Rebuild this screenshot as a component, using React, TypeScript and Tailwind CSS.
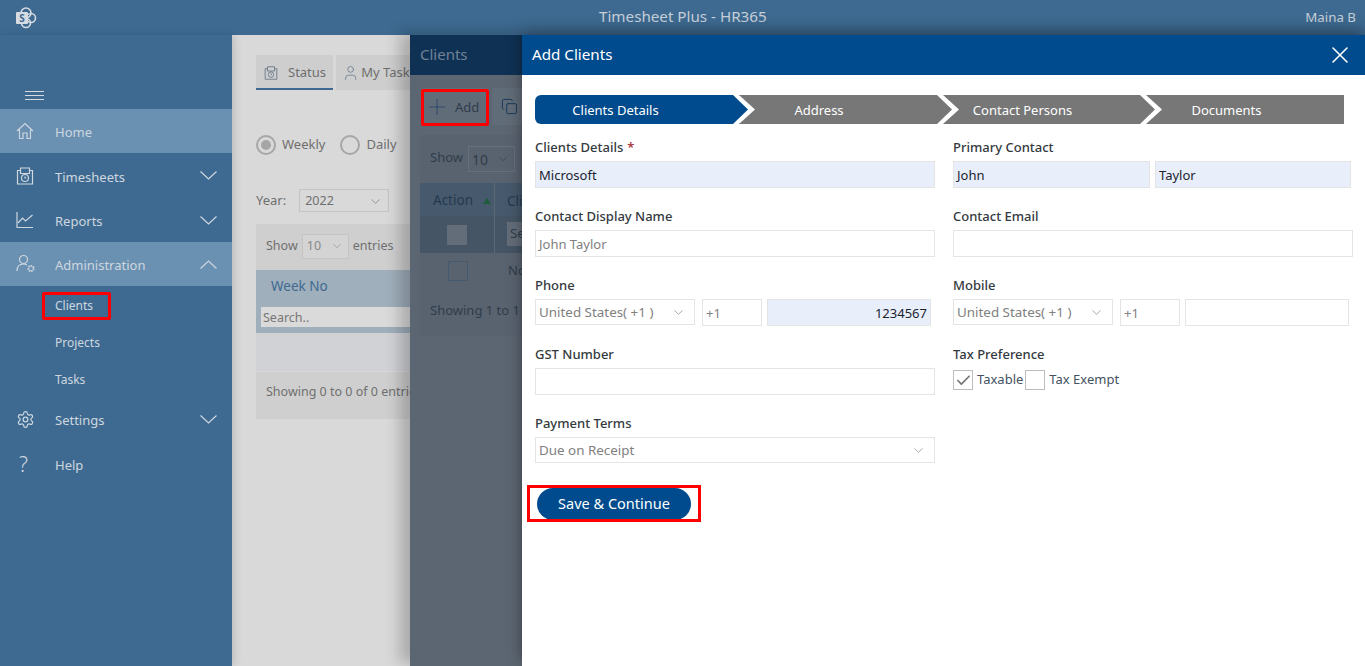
import React from "react";
import { ChevronDown, Check, X, Plus, Copy, User } from "lucide-react";

const font = "font-['Noto_Sans',sans-serif]";

function Caret({ up }: { up?: boolean }) {
  return (
    <svg width="17" height="9" viewBox="0 0 17 9" fill="none" stroke="#ced7df" strokeWidth="1.2">
      <polyline points={up ? "0.5,8.5 8.5,1 16.5,8.5" : "0.5,0.5 8.5,8 16.5,0.5"} />
    </svg>
  );
}

function NavItem({ label, icon, active, caret, className = "h-11" }: { label: string; icon: React.ReactNode; active?: boolean; caret?: "down" | "up"; className?: string }) {
  return (
    <div className={`flex items-center pl-4 pr-[15px] text-[13px] text-[#ced7df] ${active ? "bg-[#6a90b2]" : ""} ${className}`}>
      <span className="flex w-[39px] shrink-0">{icon}</span>
      <span className="flex-1 pt-[4px]">{label}</span>
      {caret && <Caret up={caret === "up"} />}
    </div>
  );
}

function Field({ label, children, required }: { label: string; children: React.ReactNode; required?: boolean }) {
  return (
    <div className="h-[69px]">
      <div className="flex h-[26px] items-center text-[13px] font-medium text-[#343a40]">
        {label}
        {required && <span className="ml-1 text-[#a52a2a]">*</span>}
      </div>
      {children}
    </div>
  );
}

function Box({ children, filled, className = "", right }: { children?: React.ReactNode; filled?: boolean; className?: string; right?: boolean }) {
  return (
    <div className={`flex h-[27px] items-center border border-[#e4e4e4] px-[3px] pt-[3px] text-[13px] ${filled ? "bg-[#e8effb] text-[#1b2330]" : "bg-white text-[#808080]"} ${right ? "justify-end" : ""} ${className}`}>
      {children}
    </div>
  );
}

function SelectBox({ children, className = "" }: { children: React.ReactNode; className?: string }) {
  return (
    <div className={`flex h-[26px] items-center justify-between border border-[#e4e4e4] bg-white pl-[3px] pr-[8px] text-[13.4px] text-[#808080] ${className}`}>
      <span>{children}</span>
      <ChevronDown size={15} strokeWidth={1} className="text-[#777]" />
    </div>
  );
}

function PhoneRow({ filled, value }: { filled?: boolean; value?: string }) {
  return (
    <div className="flex items-start">
      <SelectBox className="w-40">United States( +1 )</SelectBox>
      <Box className="ml-[7px] w-[60px]">+1</Box>
      <Box filled={filled} right className="ml-[5px] w-[164px]">{value}</Box>
    </div>
  );
}

function Step({ label, className, color }: { label: string; className: string; color: string }) {
  return (
    <div className={`relative flex h-[29px] items-center justify-center pt-[3px] text-[13px] text-white ${className}`}>
      {label}
      {color !== "" && (
        <svg className="absolute right-[-17px] top-0 z-10" width="24" height="29" viewBox="0 0 24 29">
          <polygon points="0,0 6,0 22,14.5 6,29 0,29" fill="#ffffff" />
          <polygon points="0,0 15,14.5 0,29" fill={color} />
        </svg>
      )}
    </div>
  );
}

function SheetIcon({ size, color }: { size: number; color: string }) {
  return (
    <svg width={size} height={size} viewBox="0 0 18 18" fill="none" stroke={color} strokeWidth="1.2">
      <path d="M1.5 3.5H4.5V1H13.5V3.5H16.5V17H1.5Z" />
      <path d="M4.5 3.5V6.5H13.5V3.5" />
      <circle cx="9" cy="11" r="3.5" />
      <path d="M9 9.5V11H10.2" />
    </svg>
  );
}

export default function App() {
  return (
    <div className={`${font} relative h-[666px] w-[1365px] overflow-hidden bg-[#3e6a91]`}>
      <header className="flex h-[35px] items-center justify-between bg-[#3e6a91] pl-[15px] pr-[9px] text-[#c7d0d9]">
        <svg width="22" height="22" viewBox="0 0 22 22">
          <circle cx="11" cy="6" r="5" fill="none" stroke="#d5dbe1" strokeWidth="1.6" />
          <circle cx="16" cy="11" r="4.5" fill="none" stroke="#d5dbe1" strokeWidth="1.6" />
          <circle cx="11" cy="16" r="4.5" fill="none" stroke="#d5dbe1" strokeWidth="1.6" />
          <rect x="1" y="5" width="12" height="12" rx="1" fill="#d5dbe1" />
          <text x="7" y="15" textAnchor="middle" fontSize="10" fontWeight="700" fill="#3e6a91">S</text>
        </svg>
        <span className="absolute left-[599px] top-[6px] text-[15.2px] leading-5">Timesheet Plus - HR365</span>
        <span className="text-[13.3px]">Maina B</span>
      </header>

      <div className="flex h-[631px]">
        <aside className="relative w-[232px] shrink-0 bg-[#3e6a91] shadow-[2px_0_8px_rgba(0,0,0,0.14)]">
          <div className="flex h-[74px] items-end pb-[9px] pl-[25px]">
            <div className="w-[19px] space-y-[3px]">
              <div className="h-px bg-[#d5dbe1]" />
              <div className="h-px bg-[#d5dbe1]" />
              <div className="h-px bg-[#d5dbe1]" />
            </div>
          </div>
          <NavItem active label="Home" icon={<svg width="18" height="18" viewBox="0 0 18 18" fill="none" stroke="#ced7df" strokeWidth="1.2"><path d="M1 9 9 1.5 17 9M3.5 7.5V16.5H7V11H11V16.5H14.5V7.5" /></svg>} />
          <NavItem className="h-[45px]" caret="down" label="Timesheets" icon={<SheetIcon size={18} color="#ced7df" />} />
          <NavItem caret="down" label="Reports" icon={<svg width="18" height="18" viewBox="0 0 18 18" fill="none" stroke="#ced7df" strokeWidth="1.2"><path d="M1 1V16.5H17" /><path d="M2 12 6.5 7 9.5 10 16.5 4" /></svg>} />
          <NavItem active caret="up" label="Administration" icon={<svg width="20" height="20" viewBox="0 0 20 20" fill="none" stroke="#ced7df" strokeWidth="1.2"><circle cx="7.5" cy="5.5" r="4" /><path d="M1 17C1 12.5 3.5 10 7.5 10 9 10 10 10.4 11 11" /><circle cx="15" cy="14.5" r="2.6" strokeWidth="2" strokeDasharray="1.5 0.8" /></svg>} />
          <div className="text-[12px] text-[#ced7df]">
            <div className="flex h-[37px] items-center pl-[55px] pt-[3px]">Clients</div>
            <div className="flex h-[37px] items-center pl-[55px] pt-[3px]">Projects</div>
            <div className="flex h-[37px] items-center pl-[55px] pt-[3px]">Tasks</div>
          </div>
          <NavItem caret="down" label="Settings" icon={<svg width="19" height="19" viewBox="0 0 24 24" fill="none" stroke="#ced7df" strokeWidth="1.5"><path d="M12.22 2h-.44a2 2 0 0 0-2 2v.18a2 2 0 0 1-1 1.73l-.43.25a2 2 0 0 1-2 0l-.15-.08a2 2 0 0 0-2.73.73l-.22.38a2 2 0 0 0 .73 2.73l.15.1a2 2 0 0 1 1 1.72v.51a2 2 0 0 1-1 1.74l-.15.09a2 2 0 0 0-.73 2.73l.22.38a2 2 0 0 0 2.73.73l.15-.08a2 2 0 0 1 2 0l.43.25a2 2 0 0 1 1 1.73V20a2 2 0 0 0 2 2h.44a2 2 0 0 0 2-2v-.18a2 2 0 0 1 1-1.73l.43-.25a2 2 0 0 1 2 0l.15.08a2 2 0 0 0 2.73-.73l.22-.39a2 2 0 0 0-.73-2.73l-.15-.08a2 2 0 0 1-1-1.74v-.5a2 2 0 0 1 1-1.74l.15-.09a2 2 0 0 0 .73-2.73l-.22-.38a2 2 0 0 0-2.73-.73l-.15.08a2 2 0 0 1-2 0l-.43-.25a2 2 0 0 1-1-1.73V4a2 2 0 0 0-2-2z" /><circle cx="12" cy="12" r="3" /></svg>} />
          <NavItem className="h-[46px]" label="Help" icon={<span className="pl-[3px] text-[21px] font-light leading-none">?</span>} />
        </aside>

        <main className="flex-1 bg-[#d9d9d9] pl-6 pt-[20px] text-[#6f6f6f]">
          <div className="flex h-[35px] gap-[3px] text-[13px]">
            <div className="flex w-[77px] items-center border-b-2 border-[#3e6a91] bg-[#cecece] pl-2 pt-[2px]">
              <SheetIcon size={14} color="#6c7c8c" />
              <span className="ml-[10px]">Status</span>
            </div>
            <div className="flex w-[80px] items-center bg-[#cecece] pl-[6px] pt-px">
              <User size={20} strokeWidth={1} className="text-[#5f7488]" />
              <span className="ml-[2px] whitespace-nowrap">My Tasks</span>
            </div>
          </div>
          <div className="mt-[45px] flex items-center text-[13px]">
            <span className="flex h-5 w-5 items-center justify-center rounded-full border-2 border-[#a6a6a6]"><span className="h-[10px] w-[10px] rounded-full bg-[#a6a6a6]" /></span>
            <span className="ml-[6px]">Weekly</span>
            <span className="ml-[15px] h-5 w-5 rounded-full border-2 border-[#a6a6a6]" />
            <span className="ml-[6px]">Daily</span>
          </div>
          <div className="mt-[34px] flex items-center text-[13px]">
            <span>Year:</span>
            <div className="ml-[13px] flex h-[23px] w-[90px] items-center justify-between border border-[#c4c4c4] pl-[5px] pr-[5px] pt-px text-[12.5px]">
              2022
              <ChevronDown size={15} strokeWidth={1} />
            </div>
          </div>
          <div className="mt-[12px] h-[195px] w-[300px] bg-[#cfcfcf] text-[12.5px]">
            <div className="flex h-[46px] items-center pb-[2px] pl-[10px]">
              Show
              <div className="mx-1 flex h-[25px] w-[47px] items-center justify-between border border-[#c4c4c4] bg-[#d4d4d4] pl-1 pr-1 text-[#888]">10<ChevronDown size={14} strokeWidth={1} /></div>
              entries
            </div>
            <div className="h-[63px] bg-[#a0afbc] pt-[7px]">
              <div className="pl-[15px] text-[13.5px] leading-[18px] text-[#3e6a91]">Week No</div>
              <div className="ml-[5px] mt-[12px] flex h-[20px] items-center bg-[#dadada] pl-[2px] pt-[2px] text-[#777]">Search..</div>
            </div>
            <div className="h-[39px] border-b border-[#d9d9d9] bg-[#d0d2d6]" />
            <div className="flex h-[47px] items-center whitespace-nowrap pb-[6px] pl-[10px]">Showing 0 to 0 of 0 entries</div>
          </div>
        </main>
      </div>

      {/* Red highlight on the Clients nav link */}
      <div className="pointer-events-none absolute left-[42px] top-[292px] h-[28px] w-[69px] rounded-[2px] border-[3px] border-[#ff0000]" />

      {/* Behind panel */}
      <section className="absolute bottom-0 left-[410px] top-[35px] w-[120px] bg-[#5c6672] text-[#27394b] shadow-[-10px_-3px_14px_rgba(0,0,0,0.22)]">
        <div className="flex h-[40px] items-center bg-[#0f3154] pb-[2px] pl-[10px] text-[15px] text-[#6f8296]">Clients</div>
        <div className="mt-[13px] flex h-[37px] w-[120px] pl-[11px] text-[13px]">
          <div className="flex w-[68px] items-center bg-[#616c79] pl-[3px] pt-px">
            <Plus size={26} strokeWidth={0.9} className="text-[#2a4a6a]" />
            <span className="ml-[5px] pt-[2px] text-[#2f3c49]">Add</span>
          </div>
          <div className="ml-[3px] flex w-[38px] items-center bg-[#616c79] pl-[9px]">
            <Copy size={17} strokeWidth={1.2} className="text-[#0f3154]" />
          </div>
        </div>
        <div className="ml-[10px] mt-[10px] h-[201px] bg-[#596370] text-[13px]">
          <div className="flex h-[48px] items-center pb-[2px] pl-[10px] text-[#2f3c49]">
            Show
            <div className="ml-[5px] mt-[2px] flex h-[26px] w-[47px] items-center justify-between border border-[#65707c] pl-[3px] pr-1 text-[14px] text-[#2f3c49]">10<ChevronDown size={14} strokeWidth={1} /></div>
          </div>
          <div className="flex h-[33px] bg-[#47596c] text-[13.5px] text-[#243a52]">
            <div className="flex w-[75px] items-center border-r border-[#5d6875] pl-[13px] pt-[2px]">Action<span className="ml-[10px] h-0 w-0 border-x-[4px] border-b-[6px] border-x-transparent border-b-[#1f5c3c]" /></div>
            <div className="pl-[12px] pt-[8px]">Cli</div>
          </div>
          <div className="flex h-[37px] bg-[#465565]">
            <div className="flex w-[75px] items-center justify-center border-r border-[#5d6875]"><div className="h-5 w-5 bg-[#636d79]" /></div>
            <div className="ml-[12px] mt-[6px] h-[24px] flex-1 bg-[#636d79] pl-[3px] pt-[2px] text-[#2f3c49]">Se</div>
          </div>
          <div className="flex h-[35px] items-center">
            <div className="flex w-[75px] justify-center"><div className="h-5 w-5 border border-[#47596c]" /></div>
            <span className="ml-[13px] text-[#2f3c49]">No</span>
          </div>
          <div className="flex h-[48px] items-center whitespace-nowrap pb-[2px] pl-[10px] text-[#2f3c49]">Showing 1 to 1</div>
        </div>
        <div className="pointer-events-none absolute left-[11px] top-[54px] h-[37px] w-[68px] rounded-[2px] border-[3px] border-[#ff0000]" />
      </section>

      {/* Add Clients panel */}
      <section className="absolute bottom-0 left-[522px] right-0 top-[35px] bg-white shadow-[0_-4px_14px_rgba(0,0,0,0.4)]">
        <div className="flex h-[40px] items-center justify-between bg-[#004b8d] pl-[10px] pr-[11px] text-[15.2px] text-white">
          <span className="pb-[2px]">Add Clients</span>
          <X size={28} strokeWidth={1.3} />
        </div>
        <div className="pl-[13px] pr-[21px] pt-[20px]">
          <div className="flex">
            <Step label="Clients Details" color="#004b8d" className="w-[205px] rounded-l-md bg-[#004b8d] pr-[44px]" />
            <Step label="Address" color="#777777" className="w-[204px] bg-[#777777] pr-[46px]" />
            <Step label="Contact Persons" color="#777777" className="w-[203px] bg-[#777777] pr-[46px]" />
            <Step label="Documents" color="" className="flex-1 bg-[#777777] pr-[38px]" />
          </div>
          <div className="mt-[11px] grid grid-cols-[400px_400px] gap-x-[18px]">
            <div>
              <Field required label="Clients Details"><Box filled>Microsoft</Box></Field>
              <Field label="Contact Display Name"><Box>John Taylor</Box></Field>
              <Field label="Phone"><PhoneRow filled value="1234567" /></Field>
              <Field label="GST Number"><Box /></Field>
              <Field label="Payment Terms"><SelectBox>Due on Receipt</SelectBox></Field>
            </div>
            <div>
              <Field label="Primary Contact">
                <div className="flex gap-[5px]"><Box filled className="w-[197px]">John</Box><Box filled className="w-[196px]">Taylor</Box></div>
              </Field>
              <Field label="Contact Email"><Box /></Field>
              <Field label="Mobile"><PhoneRow /></Field>
              <Field label="Tax Preference">
                <div className="mt-[2px] flex items-center text-[13px] text-[#44525f]">
                  <span className="flex h-5 w-5 items-center justify-center border border-[#bdbdbd]"><Check size={17} strokeWidth={2.4} className="text-[#777]" /></span>
                  <span className="ml-1">Taxable</span>
                  <span className="ml-[2px] h-5 w-5 border border-[#bdbdbd]" />
                  <span className="ml-1">Tax Exempt</span>
                </div>
              </Field>
            </div>
          </div>
          <div className="relative ml-[2px] mt-[8px]">
            <button className="h-8 w-[154px] rounded-full bg-[#004b8d] text-[14.5px] text-white">Save &amp; Continue</button>
            <div className="pointer-events-none absolute -left-[10px] -top-[3px] h-[37px] w-[174px] border-[3px] border-[#ff0000]" />
          </div>
        </div>
      </section>
    </div>
  );
}
